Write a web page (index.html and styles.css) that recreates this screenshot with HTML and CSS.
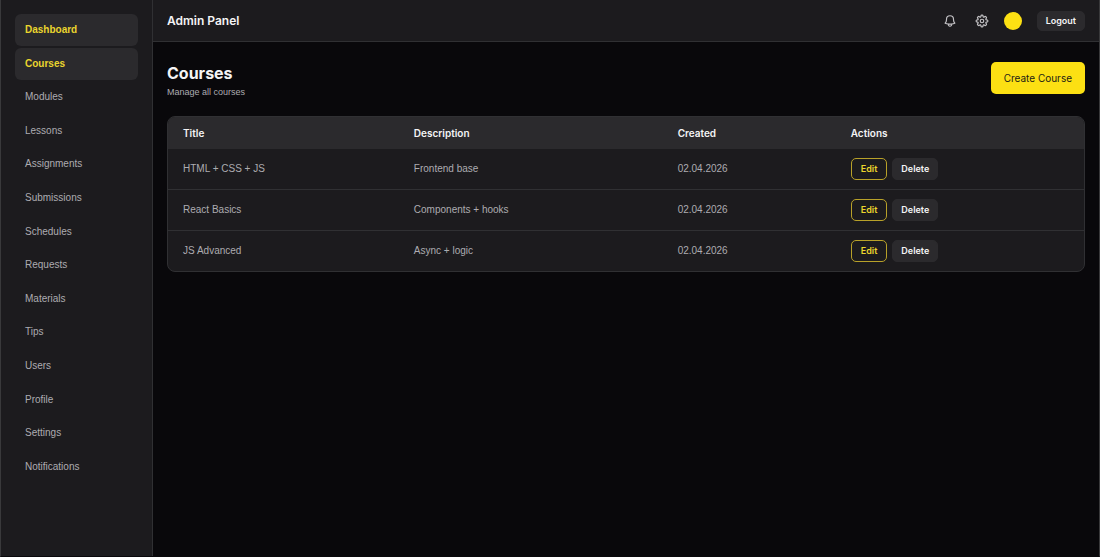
FILE: index.html
```html
<!DOCTYPE html>
<html lang="en">
<head>
<meta charset="utf-8">
<meta name="viewport" content="width=device-width, initial-scale=1">
<title>Admin Panel</title>
<link rel="stylesheet" href="styles.css">
</head>
<body>
<div class="app">
  <aside class="sidebar">
    <nav class="nav" aria-label="Main">
      <a class="nav-link active" href="#dashboard">Dashboard</a>
      <a class="nav-link active" href="#courses">Courses</a>
      <a class="nav-link" href="#modules">Modules</a>
      <a class="nav-link" href="#lessons">Lessons</a>
      <a class="nav-link" href="#assignments">Assignments</a>
      <a class="nav-link" href="#submissions">Submissions</a>
      <a class="nav-link" href="#schedules">Schedules</a>
      <a class="nav-link" href="#requests">Requests</a>
      <a class="nav-link" href="#materials">Materials</a>
      <a class="nav-link" href="#tips">Tips</a>
      <a class="nav-link" href="#users">Users</a>
      <a class="nav-link" href="#profile">Profile</a>
      <a class="nav-link" href="#settings">Settings</a>
      <a class="nav-link" href="#notifications">Notifications</a>
    </nav>
  </aside>
  <div class="page">
    <header class="topbar">
      <div class="brand">Admin Panel</div>
      <div class="tools">
        <button class="icon-btn" type="button" aria-label="Notifications">
          <svg viewBox="0 0 24 24" fill="none" stroke="currentColor" stroke-width="2" stroke-linecap="round" stroke-linejoin="round"><path d="M14.86 17.08a23.85 23.85 0 0 0 5.45-1.31A8.97 8.97 0 0 1 18 9.75V9A6 6 0 0 0 6 9v.75a8.97 8.97 0 0 1-2.31 6.02c1.73.64 3.56 1.09 5.45 1.31m5.72 0a24.26 24.26 0 0 1-5.72 0m5.72 0a3 3 0 1 1-5.72 0"/></svg>
        </button>
        <button class="icon-btn" type="button" aria-label="Settings">
          <svg viewBox="0 0 24 24" fill="none" stroke="currentColor" stroke-width="2" stroke-linecap="round" stroke-linejoin="round"><path d="M10.34 2.94c.09-.54.56-.94 1.11-.94h1.09c.55 0 1.02.4 1.11.94l.25 1.5c.07.42.38.76.78.93.4.16.85.14 1.2-.11l1.14-.83a1.13 1.13 0 0 1 1.45.12l.97.98c.39.39.44 1 .12 1.45l-.83 1.14c-.25.35-.27.8-.11 1.2.17.4.51.71.93.78l1.5.25c.54.09.94.56.94 1.11v1.09c0 .55-.4 1.02-.94 1.11l-1.5.25c-.42.07-.76.38-.93.78-.16.4-.14.85.11 1.2l.83 1.14c.32.45.27 1.06-.12 1.45l-.97.97a1.13 1.13 0 0 1-1.45.12l-1.14-.83c-.35-.25-.8-.27-1.2-.11-.4.17-.71.51-.78.93l-.25 1.5c-.09.54-.56.94-1.11.94h-1.09c-.55 0-1.02-.4-1.11-.94l-.25-1.5c-.07-.42-.38-.76-.78-.93-.4-.16-.85-.14-1.2.11l-1.14.83c-.45.32-1.06.27-1.45-.12l-.97-.97a1.13 1.13 0 0 1-.12-1.45l.83-1.14c.25-.35.27-.8.11-1.2-.17-.4-.51-.71-.93-.78l-1.5-.25A1.13 1.13 0 0 1 2 12.55v-1.09c0-.55.4-1.02.94-1.11l1.5-.25c.42-.07.76-.38.93-.78.16-.4.14-.85-.11-1.2l-.83-1.14a1.13 1.13 0 0 1 .12-1.45l.97-.98a1.13 1.13 0 0 1 1.45-.12l1.14.83c.35.25.8.27 1.2.11.4-.17.71-.51.78-.93z"/><circle cx="12" cy="12" r="3"/></svg>
        </button>
        <span class="avatar"></span>
        <button class="btn logout" type="button">Logout</button>
      </div>
    </header>
    <main class="content">
      <div class="heading">
        <div>
          <h1 class="title">Courses</h1>
          <p class="subtitle">Manage all courses</p>
        </div>
        <button class="create" type="button">Create Course</button>
      </div>
      <div class="card">
        <table class="table">
          <colgroup><col class="col-title"><col class="col-description"><col class="col-created"><col></colgroup>
          <thead>
            <tr><th scope="col">Title</th><th scope="col">Description</th><th scope="col">Created</th><th scope="col">Actions</th></tr>
          </thead>
          <tbody>
            <tr><td>HTML + CSS + JS</td><td>Frontend base</td><td>02.04.2026</td><td><div class="actions"><button class="btn edit" type="button">Edit</button><button class="btn" type="button">Delete</button></div></td></tr>
            <tr><td>React Basics</td><td>Components + hooks</td><td>02.04.2026</td><td><div class="actions"><button class="btn edit" type="button">Edit</button><button class="btn" type="button">Delete</button></div></td></tr>
            <tr><td>JS Advanced</td><td>Async + logic</td><td>02.04.2026</td><td><div class="actions"><button class="btn edit" type="button">Edit</button><button class="btn" type="button">Delete</button></div></td></tr>
          </tbody>
        </table>
      </div>
    </main>
  </div>
</div>
</body>
</html>
```
FILE: styles.css
```css
:root {
  --bg: #09080b;
  --surface: #1c1b1e;
  --raised: #2b2a2d;
  --line: #303033;
  --text: #f4f4f5;
  --muted: #adacb1;
  --accent: #fce013;
  --body-font: "Liberation Sans", Arial, sans-serif;
}
* { box-sizing: border-box; }
body {
  margin: 0;
  background: var(--bg);
  color: var(--text);
  font: 10px/16px Inter, "Liberation Sans", sans-serif;
}
button { font: inherit; cursor: pointer; }
.app {
  display: flex;
  min-height: 100vh;
  border: 1px solid #39393b;
  border-top: 0;
  border-bottom-color: var(--bg);
}
.sidebar {
  display: flex;
  flex: none;
  width: 152px;
  padding: 14px 14px 73px;
  background: var(--surface);
  border-right: 1px solid var(--line);
}
.nav {
  display: flex;
  flex: 1;
  flex-direction: column;
  justify-content: space-between;
}
.nav-link {
  padding: 8px 10px;
  border-radius: 6px;
  color: var(--muted);
  font-family: var(--body-font);
  text-decoration: none;
}
.nav-link.active {
  background: var(--raised);
  color: #ead52d;
  font-weight: 600;
}
.page { flex: 1; min-width: 0; }
.topbar {
  display: flex;
  align-items: center;
  justify-content: space-between;
  padding: 11px 14px 10px;
  background: var(--surface);
  border-bottom: 1px solid var(--line);
}
.brand { font-size: 12px; font-weight: 600; }
.tools { display: flex; align-items: center; }
.icon-btn {
  display: flex;
  margin-right: 18px;
  padding: 0;
  border: 0;
  background: none;
  color: #c3c2c5;
}
.icon-btn + .icon-btn { margin-right: 15px; }
.icon-btn svg { width: 14px; height: 14px; }
.avatar {
  width: 18px;
  height: 18px;
  border-radius: 50%;
  background: var(--accent);
}
.btn {
  padding: 2px 8px;
  border: 1px solid var(--raised);
  border-radius: 5px;
  background: var(--raised);
  color: var(--text);
  font-size: 9px;
  font-weight: 600;
}
.logout { margin-left: 15px; padding: 1px 8px; }
.content { padding: 20px 14px; }
.heading {
  display: flex;
  align-items: flex-start;
  justify-content: space-between;
  margin-bottom: 16px;
}
.title { margin: 0; font-size: 16px; line-height: 22px; font-weight: 700; }
.subtitle {
  margin: 0;
  color: var(--muted);
  font-family: var(--body-font);
  font-size: 9px;
}
.create {
  padding: 8px 13px;
  border: 0;
  border-radius: 5px;
  background: var(--accent);
  color: #222014;
}
.card {
  overflow: hidden;
  border: 1px solid var(--line);
  border-radius: 8px;
  background: var(--surface);
}
.table {
  width: 100%;
  border-collapse: collapse;
  table-layout: fixed;
}
.col-title { width: 25.2%; }
.col-description { width: 28.8%; }
.col-created { width: 18.9%; }
.table th {
  padding: 8px 15px;
  background: var(--raised);
  text-align: left;
  font-weight: 600;
}
.table td {
  padding: 9px 15px;
  color: var(--muted);
  font-family: var(--body-font);
}
.table tbody tr + tr { border-top: 1px solid var(--line); }
.actions { display: flex; gap: 5px; font-family: Inter, sans-serif; }
.edit {
  padding: 2px 9px;
  border-color: #b8a129;
  background: transparent;
  color: #ead52d;
}
```
